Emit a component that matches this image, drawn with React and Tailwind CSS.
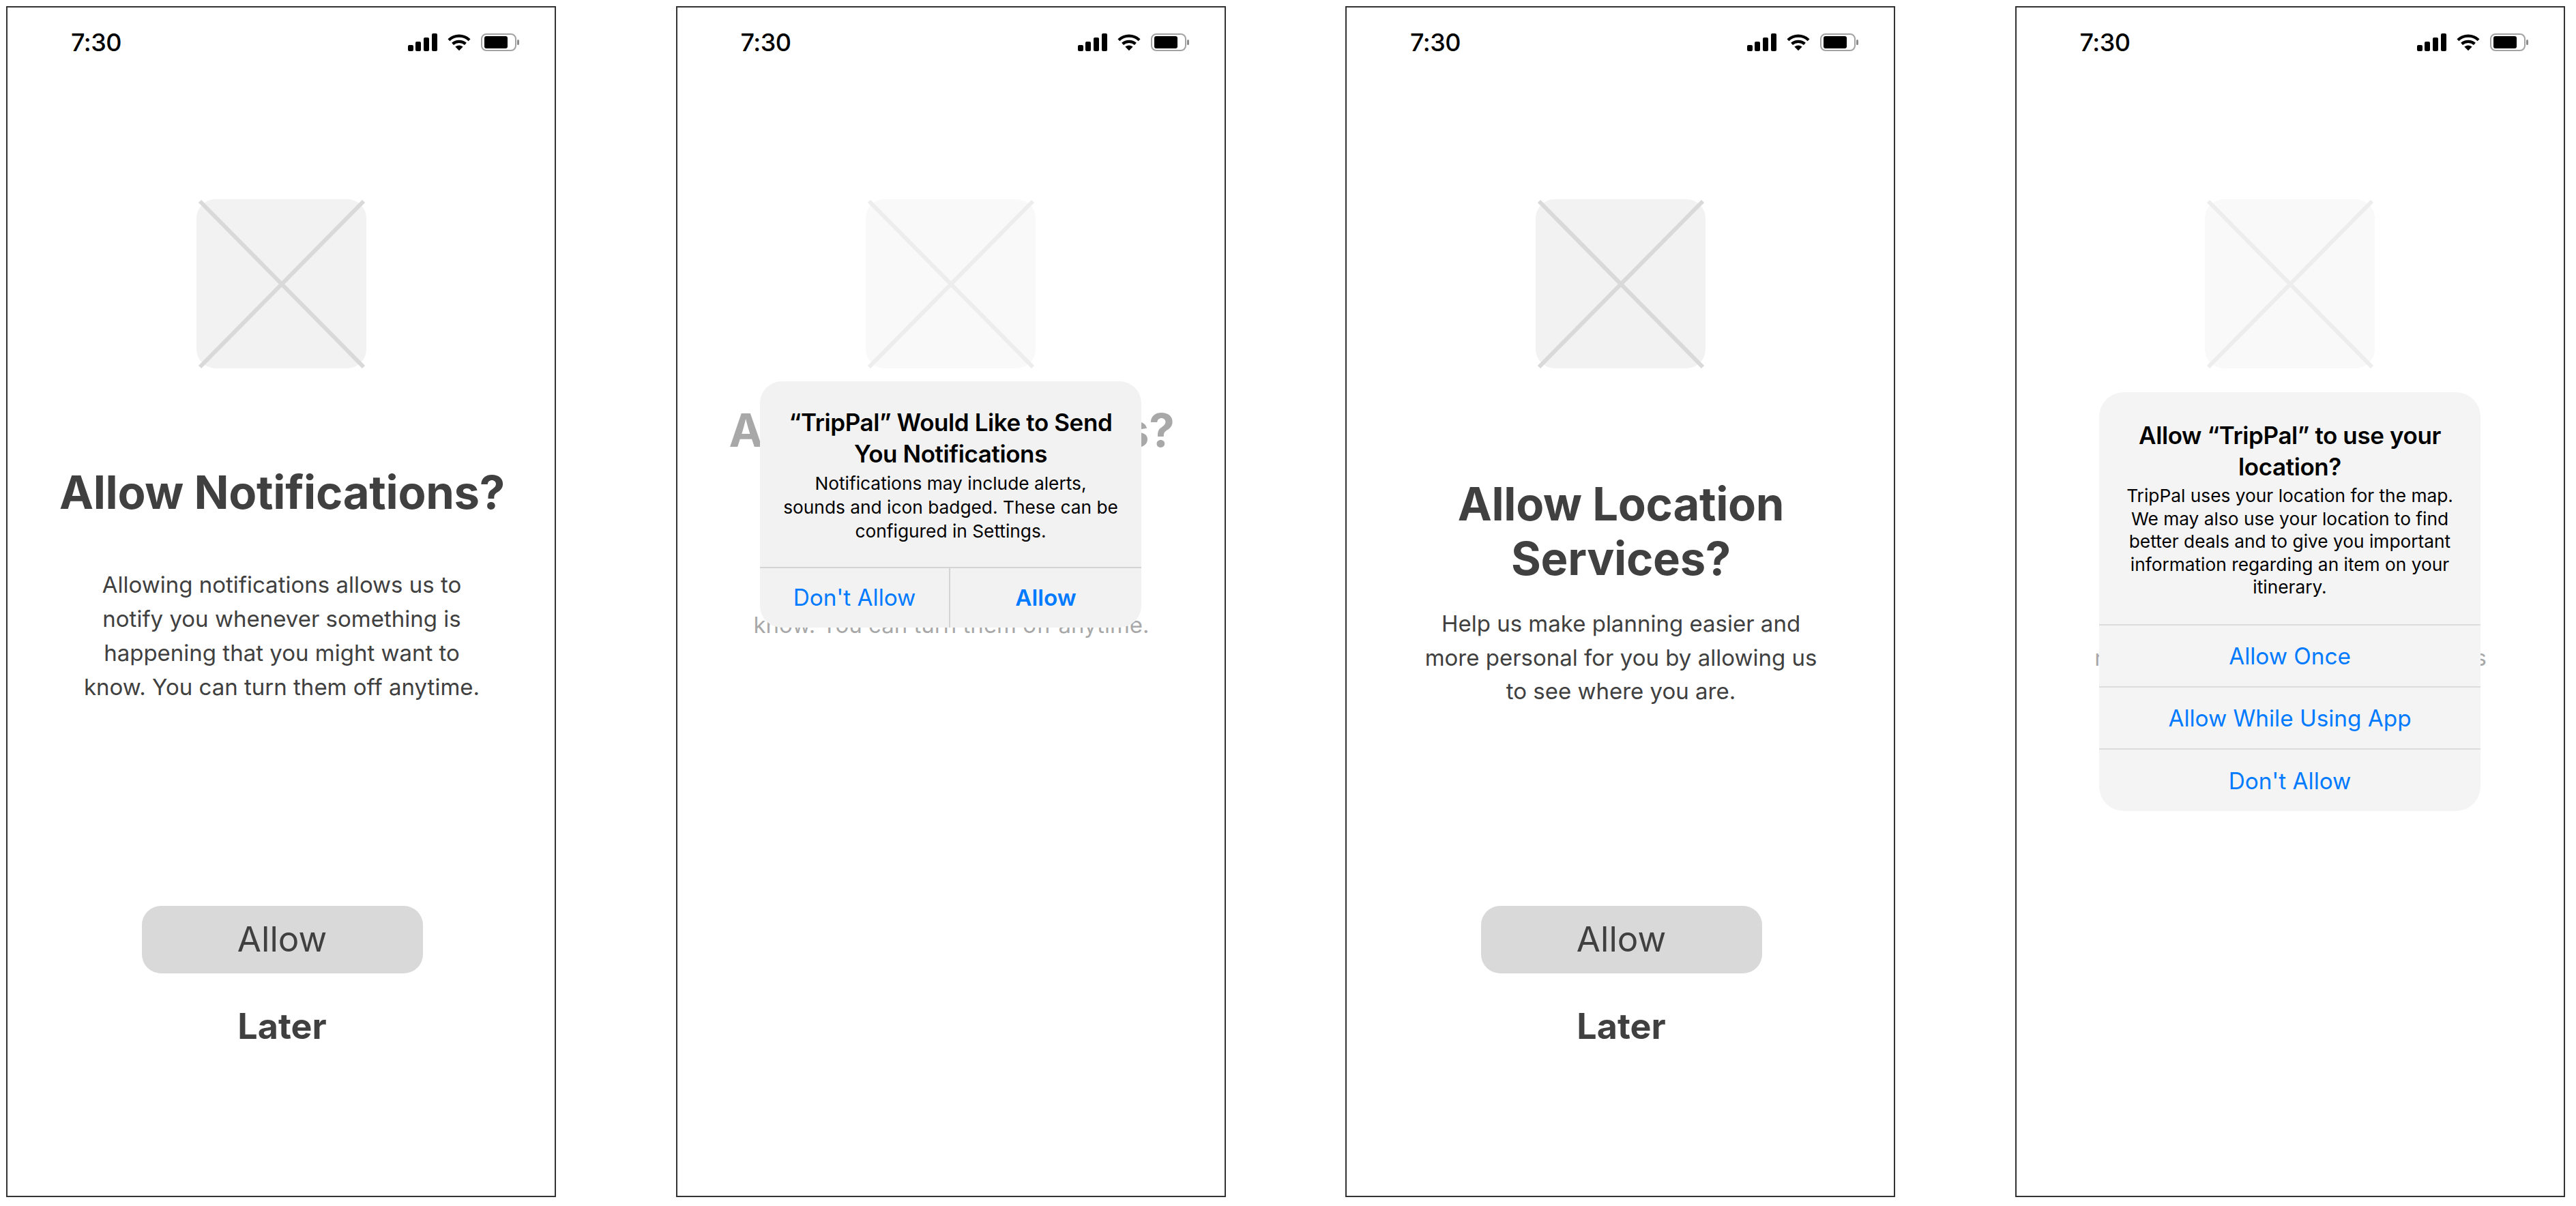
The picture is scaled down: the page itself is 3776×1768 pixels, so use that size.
import React from "react";

const StatusBar = () => (
  <div className="mt-[35px] flex h-[32px] items-center justify-between pl-[93px] pr-[51px]">
    <span className="font-['Inter'] text-[36px] font-medium leading-none tracking-[-0.5px] text-black">7:30</span>
    <div className="flex items-center gap-[15px]">
      <svg width="43" height="26" viewBox="0 0 43 26" fill="#000">
        <rect x="0" y="17" width="8" height="9" rx="2" />
        <rect x="11" y="12" width="8" height="14" rx="2" />
        <rect x="23" y="6" width="8" height="20" rx="2" />
        <rect x="35" y="0" width="8" height="26" rx="2" />
      </svg>
      <svg width="34" height="26" viewBox="0 0 36 26" fill="none" stroke="#000" strokeWidth="4.5">
        <path d="M2 9.500C11 1 25 1 34 9.500" />
        <path d="M8 15.500C13.500 10.500 22.500 10.500 28 15.500" />
        <path d="M12 20L18 26L24 20C20 17 16 17 12 20Z" fill="#000" stroke="none" />
      </svg>
      <svg width="57" height="26" viewBox="0 0 57 26" fill="none">
        <rect x="1" y="1" width="50" height="24" rx="7" stroke="#a3a3a3" strokeWidth="2" />
        <rect x="5" y="4" width="34" height="18" rx="3" fill="#000" />
        <rect x="53" y="9" width="3" height="8" rx="1.500" fill="#8c8c8c" />
      </svg>
    </div>
  </div>
);

const Placeholder = () => (
  <div className="relative mx-auto mt-[214px] h-[248px] w-[249px] rounded-[28px] bg-[#f2f2f2]">
    <svg className="absolute inset-0" width="249" height="248" viewBox="0 0 249 248" stroke="#d9d9d9" strokeWidth="6">
      <line x1="5" y1="3" x2="245" y2="246" />
      <line x1="245" y1="3" x2="5" y2="246" />
    </svg>
  </div>
);

const Buttons = () => (
  <div className="absolute inset-x-0 top-[1317px] flex flex-col items-center pl-[3px]">
    <button className="flex h-[99px] w-[412px] items-center justify-center rounded-[28px] bg-[#d9d9d9] font-['Inter'] text-[51px] text-[#404040]">
      Allow
    </button>
    <span className="mt-[46px] font-['Inter'] text-[52px] font-bold leading-[64px] text-[#404040]">Later</span>
  </div>
);

const Phone = ({ children }) => (
  <div className="relative h-[1746px] w-[806px] shrink-0 overflow-hidden border-2 border-[#333333] bg-white">
    <StatusBar />
    {children}
  </div>
);

const NotificationsBody = ({ titleClass }) => (
  <>
    <Placeholder />
    <h1 className={`${titleClass} pl-[3px] text-center font-['Inter'] text-[67px] font-bold leading-[80px] tracking-[-0.3px] text-[#404040]`}>
      Allow Notifications?
    </h1>
    <p className="mt-[70px] pl-[2px] text-center font-['Inter'] text-[33px] leading-[50px] text-[#404040]">
      Allowing notifications allows us to
      <br />
      notify you whenever something is
      <br />
      happening that you might want to
      <br />
      know. You can turn them off anytime.
    </p>
  </>
);

const LocationBody = () => (
  <>
    <Placeholder />
    <h1 className="mt-[159px] pl-[2px] text-center font-['Inter'] text-[67px] font-bold leading-[80px] tracking-[-0.3px] text-[#404040]">
      Allow Location
      <br />
      Services?
    </h1>
    <p className="mt-[31px] pl-[2px] text-center font-['Inter'] text-[33px] leading-[49.500px] text-[#404040]">
      Help us make planning easier and
      <br />
      more personal for you by allowing us
      <br />
      to see where you are.
    </p>
  </>
);

const AlertButton = ({ children, className }) => (
  <div className={`flex items-center justify-center font-['Inter'] text-[33.300px] text-[#007aff] ${className}`}>{children}</div>
);

const NotificationAlert = () => (
  <div className="absolute left-[1114px] top-[559px] w-[559px] overflow-hidden rounded-[32px] bg-[#f2f2f2]">
    <div className="flex h-[272px] flex-col items-center pt-[37px] text-center text-black">
      <h2 className="font-['Inter'] text-[35px] font-semibold leading-[46px] tracking-[-0.4px]">
        “TripPal” Would Like to Send
        <br />
        You Notifications
      </h2>
      <p className="mt-[3px] font-['Inter'] text-[26.300px] leading-[35px]">
        Notifications may include alerts,
        <br />
        sounds and icon badged. These can be
        <br />
        configured in Settings.
      </p>
    </div>
    <div className="flex h-[89px] border-t-2 border-[#d4d4d4]">
      <AlertButton className="w-[279px] border-r-2 border-[#d4d4d4]">Don't Allow</AlertButton>
      <AlertButton className="flex-1 font-semibold">Allow</AlertButton>
    </div>
  </div>
);

const LocationAlert = () => (
  <div className="absolute left-[3077px] top-[575px] w-[559px] overflow-hidden rounded-[36px] bg-[#f4f4f4]">
    <div className="flex h-[340px] flex-col items-center pt-[40px] text-center text-black">
      <h2 className="font-['Inter'] text-[35px] font-semibold leading-[46px] tracking-[-0.4px]">
        Allow “TripPal” to use your
        <br />
        location?
      </h2>
      <p className="mt-[3px] font-['Inter'] text-[26.300px] leading-[33.500px]">
        TripPal uses your location for the map.
        <br />
        We may also use your location to find
        <br />
        better deals and to give you important
        <br />
        information regarding an item on your
        <br />
        itinerary.
      </p>
    </div>
    <AlertButton className="h-[91px] border-t-2 border-[#dcdcdc] pt-[3px]">Allow Once</AlertButton>
    <AlertButton className="h-[91px] border-t-2 border-[#dcdcdc] pt-[3px]">Allow While Using App</AlertButton>
    <AlertButton className="h-[92px] border-t-2 border-[#dcdcdc] pt-[3px]">Don't Allow</AlertButton>
  </div>
);

export default function App() {
  return (
    <div className="relative flex h-[1768px] w-[3776px] gap-[175.500px] bg-white pl-[9px] pt-[9px]">
      <Phone>
        <NotificationsBody titleClass="mt-[142px]" />
        <Buttons />
      </Phone>
      <Phone>
        <div className="opacity-45">
          <NotificationsBody titleClass="mt-[51px]" />
        </div>
      </Phone>
      <Phone>
        <LocationBody />
        <Buttons />
      </Phone>
      <Phone>
        <div className="opacity-45">
          <LocationBody />
        </div>
      </Phone>
      <NotificationAlert />
      <LocationAlert />
    </div>
  );
}
